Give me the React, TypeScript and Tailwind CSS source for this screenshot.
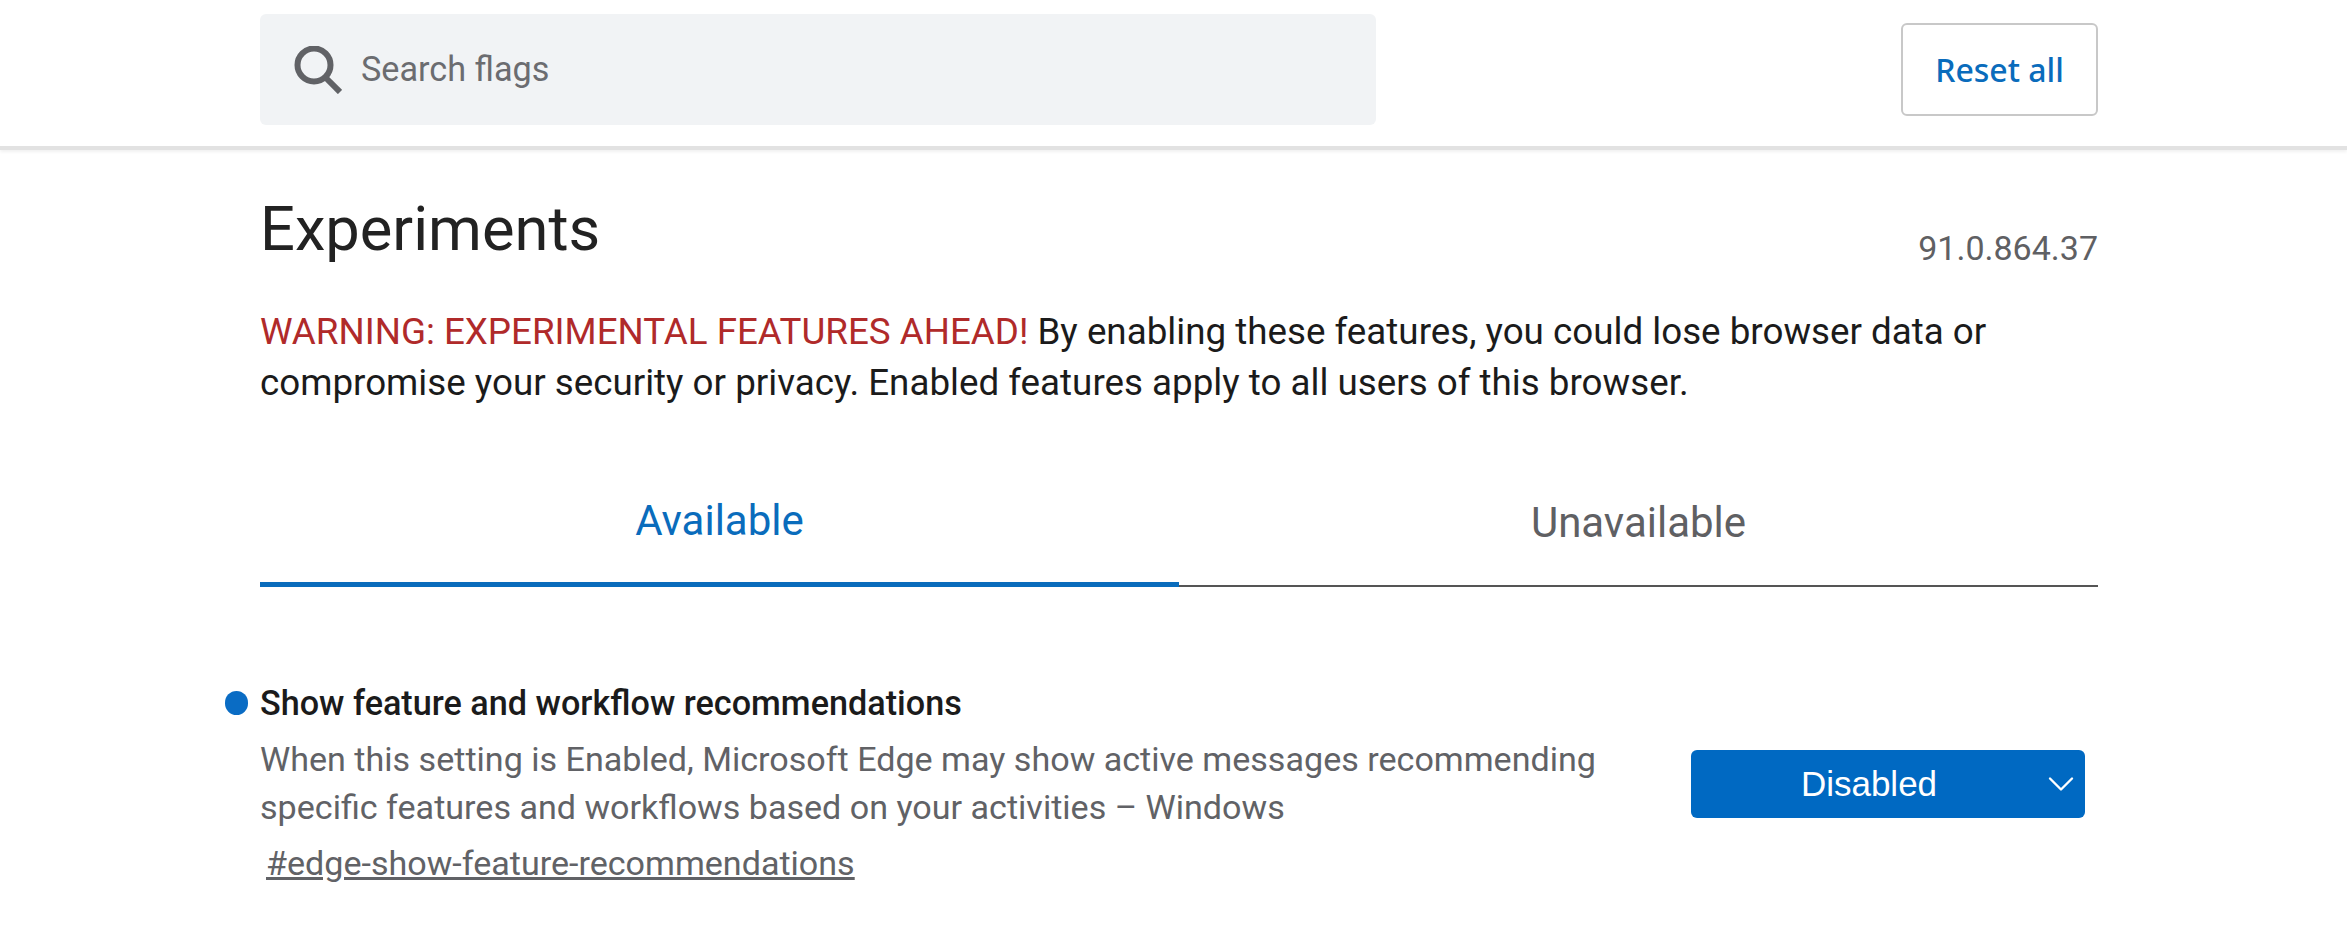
import { ChevronDown } from 'lucide-react';

const roboto = "font-['Roboto','Liberation_Sans',sans-serif]";

function SearchIcon() {
  return (
    <svg width="48" height="48" viewBox="0 0 48 48" fill="none" className="shrink-0">
      <circle cx="20" cy="19" r="16.5" stroke="#616266" strokeWidth="6" />
      <path d="M31 31 L46 46" stroke="#616266" strokeWidth="6" />
    </svg>
  );
}

export default function App() {
  return (
    <div className={`h-[933px] w-[2347px] overflow-hidden bg-white ${roboto}`}>
      {/* 顶部搜索栏 */}
      <header className="h-[150px] border-b-[4px] border-[#e2e2e2] shadow-[0_2px_3px_rgba(0,0,0,0.06)]">
        <div className="ml-[260px] flex h-full w-[1838px] items-start justify-between">
          <div className="mt-[14px] flex h-[111px] w-[1116px] items-center gap-[19px] rounded-[6px] bg-[#f1f3f5] pl-[34px]">
            <SearchIcon />
            <span className="text-[34.2px] text-[#6b6c70]">Search flags</span>
          </div>
          <button className="mt-[23px] h-[93px] w-[197px] rounded-[6px] border-2 border-[#c8c8c8] bg-white font-['Noto_Sans',sans-serif] text-[32px] font-medium text-[#0a6cbc]">
            Reset all
          </button>
        </div>
      </header>

      <main className="ml-[260px] w-[1838px]">
        <div className="flex items-end justify-between pt-[44px]">
          <h1 className="text-[61.4px] leading-[70px] text-[#222222]">Experiments</h1>
          <span className="-mb-[4px] text-[34px] leading-[40px] text-[#5f6063]">91.0.864.37</span>
        </div>

        <p className="mt-[42px] text-[36.75px] leading-[51px] text-[#1b1b1b]">
          <span className="text-[#b02a2a]">WARNING: EXPERIMENTAL FEATURES AHEAD!</span> By enabling these features, you could lose browser data or
          <br />
          compromise your security or privacy. Enabled features apply to all users of this browser.
        </p>

        {/* 标签页 */}
        <div className="mt-[69px] flex h-[110px] border-b-[2px] border-[#555555]">
          <div className="-mb-[2px] flex w-1/2 items-start justify-center border-b-[5px] border-[#0a6cbc] pt-[12px] text-[42px] text-[#0a6cbc]">
            Available
          </div>
          <div className="flex w-1/2 items-start justify-center pt-[14px] text-[42px] text-[#5f6063]">
            Unavailable
          </div>
        </div>

        {/* 实验项 */}
        <div className="mt-[94px] flex items-center justify-between">
          <div>
            <div className="-ml-[35px] flex items-center gap-[12px]">
              <span className="h-[24px] w-[23px] rounded-full bg-[#0a6cc4]" />
              <h2 className="text-[34.2px] leading-[44px] font-medium text-[#1b1b1b]">Show feature and workflow recommendations</h2>
            </div>
            <p className="mt-[10px] text-[34.1px] leading-[48px] text-[#616266]">
              When this setting is Enabled, Microsoft Edge may show active messages recommending
              <br />
              specific features and workflows based on your activities – Windows
            </p>
            <a className="mt-[8px] ml-[6px] block text-[34.1px] leading-[48px] text-[#616266] underline">#edge-show-feature-recommendations</a>
          </div>
          <div className="relative mr-[13px] flex h-[68px] w-[394px] items-center rounded-[6px] bg-[#0069c2] font-['Liberation_Sans',sans-serif] text-[35px] text-white">
            <span className="w-[356px] text-center">Disabled</span>
            <ChevronDown size={44} strokeWidth={1.3} className="absolute right-[2px] top-[12px]" />
          </div>
        </div>
      </main>
    </div>
  );
}
